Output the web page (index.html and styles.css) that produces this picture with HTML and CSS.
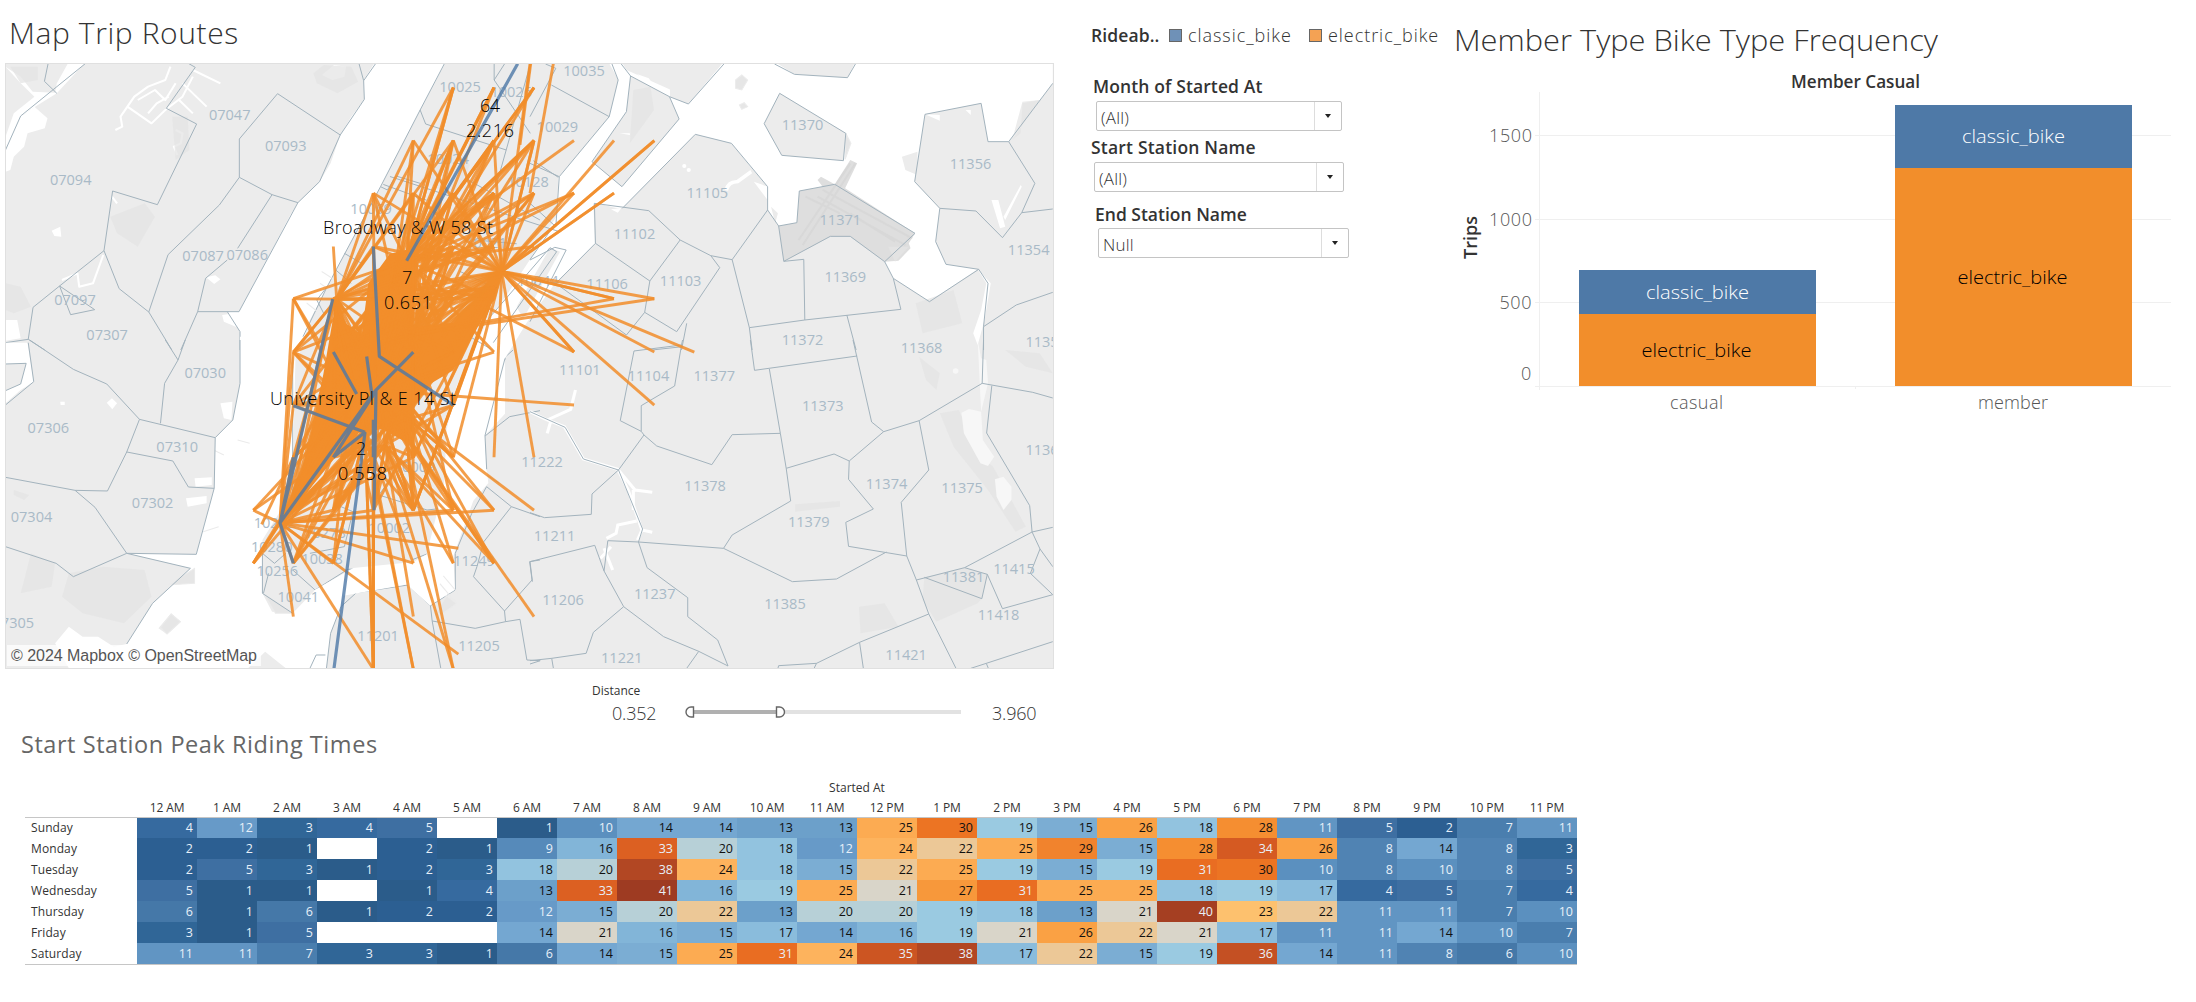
FILE: index.html
```html
<!DOCTYPE html>
<html lang="en">
<head>
<meta charset="utf-8">
<title>Bike Trips Dashboard</title>
<link rel="stylesheet" href="styles.css">
</head>
<body>
<main class="dashboard">
  <div class="top">
    <section class="map-panel">
      <h1 class="sheet-title map-title">Map Trip Routes</h1>
      <svg class="map" viewBox="5 63 1049 606" width="1049" height="606">
        <rect class="land" x="5" y="63" width="1049" height="605"/>
        <!-- Hudson, north-west quarter -->
        <g transform="scale(.34437 .33333)">
          <path class="water" d="M1090 185L1056 240L1058 298L1020 350L988 405L960 490L928 545L865 608L840 650L800 730L694 935L660 935L697 995V1060H870L900 960L950 860L1105 560L1145 480L1220 330L1295 185Z"/>
          <path class="water" d="M250 185L165 280L95 325L60 350L20 450V430L16 480L16 410L40 340L100 290L60 250L16 200L60 230L95 275L160 278L165 250L200 185Z"/>
          <path class="water" d="M60 350L100 320L138 355L130 385L80 400L70 440L40 470L30 510L16 515V450Z"/>
          <path class="water" d="M150 692L175 680L178 710L158 708ZM598 832L625 826L640 838L622 852ZM645 945L690 938L695 985L650 965ZM935 225L970 195L1005 200L1000 230L965 240ZM16 960H50L60 1015L16 1022Z"/>
          <path class="marsh" d="M495 200L480 240L430 260L390 290L370 320L440 370L480 330L530 290L560 230M400 300L450 270L480 300L510 250M430 340L455 310L490 290M520 300L560 340M530 250L600 320M560 210L640 250M370 320L350 350L355 380L335 390M510 390L530 400L525 430L505 440L515 465M180 840L225 820L230 860L270 850L300 765M325 590L340 610"/>
          <path class="shade" d="M320 650L420 610L450 650L400 740L340 700ZM16 850L60 860L90 920L40 940L16 930ZM500 350L545 350L550 450L510 480ZM910 220L940 195L1020 200L1040 245L980 280L920 250ZM30 200H110V240L60 250Z"/>
          <path class="border" d="M140 189L129 244L165 280M250 189L60 348L16 450M545 189L567 202L483 325L571 372L457 614L327 573L302 752L346 866L432 936L499 1050M302 752L173 858L96 922L82 1018L16 1028M173 858L205 944L275 929L173 858M82 1018L130 1050M1090 192L1056 242L1042 189M1056 242L1058 298L988 405L806 281L695 417V532L637 615L488 764L432 936M695 532L790 584L865 608M988 405L928 545L865 608L694 935H574L525 1050M790 584L690 745M660 780L597 835L574 935M660 935L697 995V1050M1290 192L1220 330L1105 560L950 860L880 1010M1220 330L1236 372L1470 450M1105 560L1125 570L1150 528L1220 550M1435 192V240L1540 400M1465 192L1435 240M1540 192L1440 560M1360 540L1568 660M950 860L920 900L940 940M1000 760L1050 790M975 810L1020 850"/>
        </g>
        <!-- Hudson and bay, south-west quarter -->
        <g transform="translate(0 340) scale(.34437 .33333)">
          <path class="water" d="M697 -10V130L676 240L625 293L622 445L570 643L368 640L553 685L443 790L368 912L330 920L285 890L240 890L200 860L160 910L200 985H948L960 880L990 800L1000 720L915 750L850 820L790 815L762 760V600L810 520L850 420L858 50L875 -10Z"/>
          <path class="water" d="M16 8H80L98 125L60 150L16 190ZM310 188L325 175L340 190L326 208ZM640 190L675 185L672 240L650 235ZM565 415L615 412V435L568 440ZM540 475L600 468V490L545 500ZM175 185H188V195H176Z"/>
          <path class="land" d="M16 72L76 70L60 132L16 152ZM460 865L497 820L525 845L485 883ZM720 985L770 935L830 985Z"/>
          <path class="pier" d="M490 735L565 685V730ZM466 862L497 822L524 845L485 882ZM620 330L650 345M590 575L635 560M690 300L725 310M765 760L800 820L850 820Z"/>
          <path class="shade" d="M200 700L300 680L420 690L440 770L360 850L240 820L180 770ZM40 450L85 465L70 480L40 465ZM90 640L160 670L150 740L60 760Z"/>
          <path class="border" d="M82 8L98 125L16 195M16 72L76 70L60 132L16 152M86 0L213 88L310 132L405 238L625 293L676 240L697 130V0M480 0L517 60L538 0M517 60L478 130L466 250M405 238L368 336L312 453L218 451L16 412M368 336L502 363L547 441L622 445L625 293M622 445L570 643L368 640L276 502L218 451M16 620L163 670L213 710L368 640L553 685L443 790L368 912M850 50V550M762 760V640L797 670L830 640M762 760L850 820M780 700L765 760M915 750L850 690M915 750L1010 688L1195 680L1245 640L1285 520M1245 640L1195 660M1100 465L1125 430M1100 465L1240 510L1285 505M990 500L1025 515L1000 620L900 640M948 985L960 880L990 800L1035 758L1185 735L1250 797L1322 750V640L1370 520L1413 440L1485 500L1568 530M1413 405L1406 290L1480 230L1568 212M1406 290L1468 50L1490 30M1413 405L1450 430M1485 500L1405 605L1385 680L1375 710L1465 813L1545 720L1538 665L1568 660M1465 813L1468 845L1380 865L1255 843L1250 797M1255 843L1280 985M1468 845L1510 838L1530 960L1568 962M900 985L918 945H945"/>
        </g>
        <!-- East River -->
        <g transform="translate(240 50) scale(.33333 .3954)">
          <path class="water" d="M1105 30L1135 75L1108 170L955 322L950 420L870 530L800 620L745 680L650 850L620 960L612 1100L560 1275L520 1295L340 1310L225 1365L170 1430L230 1450L275 1440L310 1380L500 1352L570 1405L645 1365L640 1280L700 1140L745 1095L740 1060L735 975L795 920V780L860 690L945 590L1065 490L1060 385L1140 402L1290 250V100Z"/>
          <path class="land" d="M830 650L930 500L960 510L850 680Z"/>
          <path class="border" d="M745 680L930 500L950 510L760 740M870 530L945 440M955 322L880 280M795 780L735 975L740 1060M450 320L960 460M430 340L560 380M700 480L830 490M660 560L760 600M640 700L760 760"/>
          <path class="pier" d="M590 1420L620 1380L650 1400L600 1430ZM610 1330L655 1375M600 1350L645 1395M245 560L300 590M240 590L290 620M200 640L230 660"/>
          <path class="shade" d="M540 330L640 240L690 290L650 370Z"/>
        </g>
        <!-- Flushing Bay, north-east quarter -->
        <g transform="translate(530 0) scale(.34437 .33333)">
          <path class="water" d="M268 625L480 403L585 430L640 500L690 560V630L722 678L775 668L782 573L885 553L1118 700L1030 785L1055 835L1160 905L1300 808L1208 793L1178 725L1190 625L1117 545L1147 343L1310 310L1330 425H1390L1518 250V185H945L922 233L768 223L710 185H563L460 312L405 290L290 225L265 185H238L256 240L230 350L85 530L75 680L120 640L187 610Z"/>
          <path class="land" d="M292 228L405 290L433 357L267 560L180 485L280 335ZM725 280L917 400L910 482L731 466L680 371ZM1080 470L1125 455V525L1090 510ZM1430 305L1480 300L1400 420Z"/>
          <path class="pier" d="M597 240L615 225L632 240L615 270L597 265ZM608 315L622 308L632 320L615 328ZM917 400L932 430L915 478Z"/>
          <path class="airport" d="M782 573L850 560L835 540L845 530L885 553L930 480L950 490L915 565L1118 700L1100 730L1105 745L1070 782L1030 785L930 710H872L737 784L722 678L775 668Z"/>
          <path class="runway" d="M780 720L930 490M792 735L945 490M850 570L1110 715M835 590L1090 735M800 590L900 640M930 640L1060 725"/>
          <path class="water" d="M1340 600L1360 600L1380 680L1365 685ZM1375 650L1425 555L1428 560L1380 660ZM1300 808L1338 850L1320 960L1300 1035L1287 1000L1310 930L1325 850ZM1147 343L1190 345V362ZM1265 330H1280V345ZM565 570Q570 540 600 540L640 510L645 520L605 550Q580 550 575 572ZM650 545L690 560V600ZM235 628L265 625L255 638ZM260 400H290V405ZM310 222L345 235L355 250L340 245Z"/>
          <circle class="water" cx="448" cy="498" r="6"/><circle class="water" cx="461" cy="510" r="6"/>
          <path class="shade" d="M1120 910L1230 870L1255 970L1140 1000ZM1430 310L1480 300L1400 420L1425 400ZM300 270L350 260L360 330L290 430ZM700 620L720 640L712 670ZM1040 740L1100 740L1060 785Z"/>
          <path class="border" d="M238 192L256 240L230 350L62 255M45 192L75 205L0 350M230 350L85 530L0 490M85 530L75 680L0 610M265 192L292 228L405 290L460 312L563 192M292 228L280 335L180 485L267 560L433 357L405 290M710 192L768 223L922 233L945 192M725 280L917 400L910 482L731 466L680 371ZM268 625L480 403L585 430L690 560V630L587 779L525 767L436 720L345 632L187 610L190 730L348 843L436 720M690 630L722 678L737 784L872 709H930L1030 785L1118 700L885 553L782 573L775 668L722 678M737 784L795 778L798 960L637 983L587 779M525 767L551 803L426 995L333 937L348 843M190 730L75 850L280 1005L333 937M637 983L645 1050M798 960L1077 928L1055 835L1030 785M1055 835L1160 905L1303 808L1330 850L1317 980V1050M920 945L947 1050M1303 808L1208 793L1178 725L1190 625L1117 545L1147 343L1310 310L1330 425H1390L1518 250M1390 425L1466 550L1428 638L1372 713L1295 633L1190 625M1428 638L1518 627M1317 980L1412 915L1518 877M455 970L440 1050M355 1050L443 1040M0 780L72 742L105 750L0 965"/>
        </g>
        <!-- Queens and Brooklyn, south-east quarter -->
        <g transform="translate(530 340) scale(.34437 .33333)">
          <path class="creek" d="M0 215L50 240L100 260L155 357L255 388L305 450L355 457M50 240L118 208L132 150M50 280L60 245M255 388L285 450L325 570L312 600M325 570L355 577M310 543L255 555L250 580L222 595M300 450V510M215 625L240 690M205 655L235 620"/>
          <path class="shade" d="M1145 712L1262 683L1328 703L1312 776L1300 790L1180 845L1140 780ZM955 800L1030 790L1070 860L960 880ZM1380 30L1480 40L1518 100L1440 80ZM1190 220L1245 210L1310 350L1345 380L1440 560L1410 575L1330 450L1230 320ZM770 493L900 483V500L770 515ZM1130 50L1190 100L1180 150L1150 120Z"/>
          <path class="pond" d="M1253 218L1275 207L1310 215L1315 300L1348 350L1330 378L1308 370L1260 280ZM1350 418L1375 410L1398 440V480L1375 510L1355 470ZM1310 215L1330 130L1325 60L1310 55L1300 0"/>
          <circle class="pond" cx="1236" cy="93" r="8"/>
          <path class="border" d="M0 215L102 262L155 357L257 390L331 285L368 318L528 374L587 284L727 280L695 87M257 390L180 462L178 523L42 533L0 518M257 390L327 567L315 606L340 683L458 773V830L545 900L575 978L490 934L388 890L272 800L215 693L226 602L315 606L562 625L762 725L890 717L1035 636M562 625L587 585L757 483L744 385L727 280M0 665L188 616L215 693M0 665L7 725M272 800L184 877L163 940L63 955L0 962M63 955L68 985M30 962L0 972M490 934L455 985M720 985L722 977L832 970L957 907L1158 822L1122 720L1262 683L1328 703L1312 776L1145 712M832 970L825 985M957 907L968 985M1158 822L1237 985M1122 720L1094 648L925 619L917 547L997 507L925 418L927 363L883 342L744 385M927 363L1027 275L992 246L938 0M1027 275L1130 242L1158 390L1078 487L1094 648M1130 242L1313 130L1460 157L1518 174M1317 0L1313 130M1341 137L1326 279L1451 497L1458 576L1262 683M1458 576L1518 562M1458 576L1481 627L1453 700L1518 764L1372 806L1328 703M1481 627L1518 680M1280 985L1325 970L1518 905M1325 970L1331 985M640 0L652 91L950 48M443 0L440 15L302 33L262 242L323 274V197L420 138L440 15M323 274L331 285"/>
        </g>
        <g class="zips" transform="scale(1.4005)">
          <text x="164" y="85.5">07047</text><text x="204" y="108">07093</text><text x="50.500" y="132">07094</text><text x="145" y="186.500">07087</text><text x="176.500" y="186">07086</text><text x="53.500" y="217.500">07097</text><text x="76.500" y="242.500">07307</text><text x="146.500" y="270">07030</text><text x="34.500" y="309.500">07306</text><text x="126.500" y="322.500">07310</text><text x="109" y="363">07302</text><text x="22.500" y="372.500">07304</text><text x="9.500" y="448.500">07305</text>
          <text x="328.500" y="66">10025</text><text x="365" y="69">10026</text><text x="417" y="54.500">10035</text><text x="398" y="94">10029</text><text x="320" y="117">10024</text><text x="377" y="133.500">10128</text><text x="265" y="152.500">10069</text><text x="384" y="204.500">10044</text><text x="347" y="177">10021</text><text x="296" y="337">10009</text><text x="278" y="380.500">10002</text><text x="196" y="377">10282</text><text x="194" y="394.500">10280</text><text x="198" y="411">10256</text><text x="232" y="384">10278</text><text x="230" y="402.500">10038</text><text x="213" y="430">10041</text>
          <text x="270" y="457.500">11201</text><text x="342" y="464.500">11205</text><text x="338.500" y="404">11249</text><text x="387" y="333.500">11222</text><text x="396" y="386">11211</text><text x="402" y="432">11206</text><text x="467.500" y="428">11237</text><text x="444" y="473.500">11221</text><text x="414" y="267.500">11101</text><text x="463" y="272">11104</text><text x="453" y="170.500">11102</text><text x="433.500" y="206.500">11106</text><text x="486" y="204.500">11103</text><text x="505" y="141.500">11105</text><text x="573" y="92.500">11370</text><text x="600" y="161">11371</text><text x="693" y="120.500">11356</text><text x="603.500" y="201">11369</text><text x="734.500" y="182">11354</text><text x="573" y="246">11372</text><text x="658" y="252">11368</text><text x="747" y="247.500">11355</text><text x="510" y="272">11377</text><text x="587.500" y="293.500">11373</text><text x="747" y="325">11367</text><text x="503.500" y="350.500">11378</text><text x="633" y="349">11374</text><text x="687" y="352">11375</text><text x="577.500" y="376.500">11379</text><text x="560.500" y="434.500">11385</text><text x="688" y="415.500">11381</text><text x="724" y="409.500">11415</text><text x="713" y="442.500">11418</text><text x="647" y="471.500">11421</text>
        </g>
        <g transform="translate(240 50) scale(.33333 .3954)">
          <path class="core" d="M290 625L315 690L365 720L385 590L450 515L500 505L535 540L520 700L640 690L785 570L740 660L640 810L560 850L515 900L515 1000L430 960L380 950L340 980L250 1060L160 1150L215 960L250 820Z"/>
          <g id="routes"></g>
          <path class="classic" d="M833 35L500 533M400 497L418 775L640 898M280 764L350 870M380 775L397 880M520 764L408 860M160 900L375 967M278 630L160 1060L120 1196L160 1298M160 1030L122 1190M120 1196L408 860M280 1030L405 865M280 1030L375 967L282 1564M400 935V1030M408 860L402 1164"/>
        </g>
        <g class="stations">
          <text x="480" y="112" textLength="20">64</text>
          <text x="466" y="137" textLength="48">2.216</text>
          <text x="323" y="234" textLength="170">Broadway &amp; W 58 St</text>
          <text x="402" y="284" textLength="10">7</text>
          <text x="384" y="309" textLength="48">0.651</text>
          <text x="270" y="405" textLength="186">University Pl &amp; E 14 St</text>
          <text x="356" y="455" textLength="10">2</text>
          <text x="338" y="480" textLength="49">0.558</text>
        </g>
        <rect class="credit-box" x="7" y="645" width="254" height="21"/>
        <text class="credit" x="11" y="660.500" textLength="246">© 2024 Mapbox © OpenStreetMap</text>
        <rect class="frame" x="5.500" y="63.500" width="1048" height="605"/>
      </svg>
      <div class="distance">
        <div class="distance-label">Distance</div>
        <div class="distance-row">
          <span class="distance-value">0.352</span>
          <svg class="slider" width="280" height="14" viewBox="0 0 280 14">
            <rect x="8" y="5" width="268" height="4" fill="#e2e2e2"/>
            <rect x="8" y="5" width="84" height="4" fill="#b0b0b0"/>
            <path d="M8.500 2H6A5 5 0 0 0 6 12H8.500Z" class="handle"/>
            <path d="M91.500 2H94.500A5 5 0 0 1 94.500 12H91.500Z" class="handle"/>
          </svg>
          <span class="distance-value">3.960</span>
        </div>
      </div>
    </section>

    <aside class="filters">
      <div class="legend">
        <b class="legend-title">Rideab..</b>
        <i class="swatch blue"></i><span class="classic-name">classic_bike</span>
        <i class="swatch orange"></i><span class="electric-name">electric_bike</span>
      </div>
      <div class="filter month"><label>Month of Started At</label><div class="select"><span>(All)</span><i class="arrow"></i></div></div>
      <div class="filter start"><label>Start Station Name</label><div class="select"><span>(All)</span><i class="arrow"></i></div></div>
      <div class="filter end"><label>End Station Name</label><div class="select"><span>Null</span><i class="arrow"></i></div></div>
    </aside>

    <section class="chart-panel">
      <svg class="chart" viewBox="1446 0 750 430" width="750" height="430">
        <text class="title" x="1454" y="51" textLength="484" lengthAdjust="spacingAndGlyphs">Member Type Bike Type Frequency</text>
        <text class="strong" x="1791" y="88" textLength="129" lengthAdjust="spacingAndGlyphs">Member Casual</text>
        <path class="grid" d="M1539.500 92V390M1535 135.500H2171M1535 219.500H2171M1535 302.500H2171M1535 386.500H2171M1855.500 386V389"/>
        <rect class="b" x="1579" y="270" width="237" height="44"/><rect class="o" x="1579" y="314" width="237" height="72"/>
        <rect class="b" x="1895" y="105" width="237" height="63"/><rect class="o" x="1895" y="168" width="237" height="218"/>
        <g class="axis">
          <text x="1489" y="142" textLength="43">1500</text><text x="1489" y="225.500" textLength="43">1000</text><text x="1499.500" y="309" textLength="32">500</text><text x="1521" y="380">0</text>
          <text x="1670" y="409" textLength="53">casual</text><text x="1978" y="409" textLength="70">member</text>
        </g>
        <g class="bar-label">
          <text class="light" x="1646" y="299" textLength="103" lengthAdjust="spacingAndGlyphs">classic_bike</text><text x="1641.500" y="357" textLength="110" lengthAdjust="spacingAndGlyphs">electric_bike</text>
          <text class="light" x="1962" y="143" textLength="103" lengthAdjust="spacingAndGlyphs">classic_bike</text><text x="1957.500" y="284" textLength="110" lengthAdjust="spacingAndGlyphs">electric_bike</text>
        </g>
        <text class="strong" transform="translate(1477 259) rotate(-90)" textLength="43" lengthAdjust="spacingAndGlyphs">Trips</text>
      </svg>
    </section>
  </div>

  <section class="heat-panel">
    <h2 class="heat-title">Start Station Peak Riding Times</h2>
    <div class="heat-caption">Started At</div>
    <div class="heat-head" id="hours"></div>
    <div class="heat-body" id="heat"></div>
  </section>
</main>
<script src="script.js"></script>
</body>
</html>
```
FILE: styles.css
```css
* { box-sizing: border-box; }
body { margin: 0; background: #fff; color: #333; font-family: "Open Sans", "Noto Sans", sans-serif; }
.dashboard { width: 2196px; height: 1002px; overflow: hidden; display: flex; flex-direction: column; }
.top { display: flex; height: 725px; }

.map-panel { width: 1060px; padding-left: 5px; }
.sheet-title { margin: 0; font-weight: 300; font-size: 30px; line-height: 65px; height: 63px; padding-left: 4px; }
.map { display: block; }
.map-title { letter-spacing: .6px; }
.land { fill: #ececec; }
.water { fill: #fff; }
.shade { fill: #e4e4e4; opacity: .75; }
.pier { fill: #e6e6e6; stroke: #ebebeb; stroke-width: 3; }
.airport { fill: #dedede; }
.runway { fill: none; stroke: #d3d3d3; stroke-width: 6; opacity: .6; }
.marsh { fill: none; stroke: #fff; stroke-width: 6; stroke-linejoin: round; }
.creek { fill: none; stroke: #fff; stroke-width: 9; }
.pond { fill: #f7f7f7; }
.border { fill: none; stroke: #a3b3bd; stroke-width: 1; vector-effect: non-scaling-stroke; }
.zips { font-size: 10.400px; fill: #a9bac7; text-anchor: middle; }
.core { fill: #f28e2b; }
.electric, .classic { fill: none; vector-effect: non-scaling-stroke; stroke-linejoin: bevel; }
.electric { stroke: #f28e2b; stroke-width: 2.900; opacity: .85; }
.classic { stroke: #4e79a7; stroke-width: 3.200; opacity: .8; }
.stations { font-size: 18px; font-weight: 300; fill: #000; }
.credit-box { fill: #fff; opacity: .75; }
.credit { font: 16px "Liberation Sans", Arial, sans-serif; fill: #555; }
.frame { fill: none; stroke: #e0e0e0; }

.distance { width: 460px; margin-left: 587px; padding-top: 14px; }
.distance-label { font-size: 12px; line-height: 16px; }
.distance-row { display: flex; align-items: center; height: 20px; margin-top: 4px; padding-left: 20px; font-size: 18px; font-weight: 300; letter-spacing: -.2px; }
.distance-value { width: 43px; line-height: 20px; }
.slider { margin: 0 27px 0 30px; position: relative; top: -1px; }
.handle { fill: #fff; stroke: #666; stroke-width: 1.400; }

.filters { width: 386px; padding: 24px 0 0 31px; font-size: 18px; }
.legend { display: flex; align-items: center; height: 22px; white-space: nowrap; font-weight: 300; letter-spacing: .95px; }
.legend-title { font-weight: 600; width: 78px; font-size: 17.500px; letter-spacing: .1px; }
.swatch { width: 13px; height: 13px; border: 1px solid #666; margin-right: 6px; }
.blue { background: #6f91b7; }
.orange { background: #f4a254; }
.classic-name { width: 121px; }
.filter label { display: block; font-weight: 600; font-size: 17.500px; line-height: 22px; white-space: nowrap; }
.month { margin: 29px 0 0 2px; }
.month label { letter-spacing: .12px; }
.start { margin: 5px 0 0 0; }
.start label { letter-spacing: .2px; }
.end { margin: 11px 0 0 4px; }
.select { display: flex; align-items: center; justify-content: space-between; height: 30px; margin-left: 3px; border: 1px solid #c4c4c4; border-radius: 2px; font-size: 17px; font-weight: 300; color: #333; padding-left: 4px; }
.month .select { width: 246px; margin-top: 4px; }
.start .select { width: 250px; margin-top: 4px; }
.end .select { width: 251px; margin-top: 3px; }
.select span { padding-top: 2px; letter-spacing: .2px; }
.arrow { width: 27px; height: 28px; border-left: 1px solid #ddd; display: grid; place-items: center; }
.arrow::after { content: ""; border: 3.500px solid transparent; border-top: 4px solid #222; border-bottom: 0; }

.chart { display: block; }
.chart .title { font-size: 30px; font-weight: 300; fill: #333; }
.chart .strong { font-size: 17.500px; font-weight: 600; fill: #333; }
.grid { fill: none; stroke: #efefef; }
.b { fill: #4e79a7; }
.o { fill: #f28e2b; }
.axis { font-size: 18px; font-weight: 300; fill: #555; }
.bar-label { font-size: 18px; font-weight: 300; fill: #000; }
.bar-label .light { fill: #fff; }

.heat-panel { padding-left: 25px; width: 1577px; }
.heat-title { margin: 0 0 0 -4px; font-size: 23.500px; font-weight: 400; line-height: 38px; color: #666; letter-spacing: .55px; }
.heat-caption { margin: 15px 0 0 112px; text-align: center; font-size: 12px; line-height: 20px; }
.heat-head { margin-left: 112px; display: grid; grid-template-columns: repeat(24, 60px); height: 19px; font-size: 12px; line-height: 19px; text-align: center; letter-spacing: -.1px; }
.heat-body { border-top: 1px solid #c6c6c6; border-bottom: 1px solid #c6c6c6; font-size: 12px; }
.heat-row { display: grid; grid-template-columns: 112px repeat(24, 60px); height: 21px; line-height: 21px; }
.heat-row:first-child { height: 20px; line-height: 20px; }
.day { padding-left: 6px; letter-spacing: .1px; }
.cell { padding-right: 4px; text-align: right; font-size: 12.500px; color: #111; }
.cell.light { color: #e8f0f8; }
```
FILE: script.js
```js
// Hour-by-day heat table
const ramp = {1:'#2b5c8a',2:'#2c5f92',3:'#306697',4:'#366a9f',5:'#3e6fa2',6:'#4578a8',7:'#4a7eae',8:'#5083b3',9:'#568aba',10:'#5b90bf',11:'#6195c3',12:'#679ac8',13:'#6ca0ca',14:'#74a7d1',15:'#7badd3',16:'#82b5d8',17:'#8abcdc',18:'#92c3df',19:'#9acae1',20:'#b7d0d7',21:'#d9d5c9',22:'#ecc897',23:'#fdc16e',24:'#fdb35d',25:'#fcab52',26:'#faa144',27:'#f7983b',28:'#f58e31',29:'#f1832d',30:'#ec7423',31:'#e96d22',33:'#dc6022',34:'#d55a22',35:'#cc5522',36:'#c45023',38:'#b24723',40:'#a53f22',41:'#9e3b22'};
const days = {
  Sunday: '4 12 3 4 5 - 1 10 14 14 13 13 25 30 19 15 26 18 28 11 5 2 7 11',
  Monday: '2 2 1 - 2 1 9 16 33 20 18 12 24 22 25 29 15 28 34 26 8 14 8 3',
  Tuesday: '2 5 3 1 2 3 18 20 38 24 18 15 22 25 19 15 19 31 30 10 8 10 8 5',
  Wednesday: '5 1 1 - 1 4 13 33 41 16 19 25 21 27 31 25 25 18 19 17 4 5 7 4',
  Thursday: '6 1 6 1 2 2 12 15 20 22 13 20 20 19 18 13 21 40 23 22 11 11 7 10',
  Friday: '3 1 5 - - - 14 21 16 15 17 14 16 19 21 26 22 21 17 11 11 14 10 7',
  Saturday: '11 11 7 3 3 1 6 14 15 25 31 24 35 38 17 22 15 19 36 14 11 8 6 10'
};
document.getElementById('hours').innerHTML = Array.from({length: 24}, (_, h) =>
  `<span>${h % 12 || 12} ${h < 12 ? 'AM' : 'PM'}</span>`).join('');
document.getElementById('heat').innerHTML = Object.entries(days).map(([day, row]) =>
  `<div class="heat-row"><span class="day">${day}</span>` + row.split(' ').map(v => v === '-' ? '<span></span>' :
    `<span class="cell${v < 13 || v > 30 ? ' light' : ''}" style="background:${ramp[v]}">${v}</span>`).join('') + '</div>').join('');

// Trip routes: every station hub fans out to rounded end coordinates (column, row)
const X = [40,160,280,400,520,640,762,882,1002,1122,1243,1363];
const Y = [95,229,362,497,629,764,898,1030,1164,1298,1433,1566];
const fans = [
  [500,533,'50 50 60 60 70 70 41 51 51 61 61 71 71 81 42 52 62 72 82 32 33 34 63 73 24 25 35 45 26 36 46 56 55 65 54 64 44 43 53 15 16 27 37 47 28 14'],
  [460,590,'50 41 51 60 61 42 52 62 32 63 54 64 55 25 24 26 27 17 71'],
  [540,560,'60 61 71 70 62 72 51 82 63 35 34 25 26 36 55 46'],
  [785,560,'62 72 71 71 61 a1 a1 91 92 92 82 51 41 52 42 94 94 a4 b5 a5 a6 85 85 67 77 44 54 45 35 34 24 25 46 56 55 36 47 37 48 48 33 43 32 53 57 26 27 38 28 15 17 64'],
  [765,600,'45 35 55 46 36 26 27 56 48 47 25 34 44 54'],
  [405,860,'24 34 44 33 42 43 53 54 45 55 35 25 15 16 17 27 37 47 57 57 48 48 58 68 78 38 28 18 39 69 69 29 19 86 7a 32 61 64 65 72'],
  [375,967,'08 09 18 28 19 15 16 24 25 34 44 45 54 55 3b 3b 4b 48 49 29 46 56 27 36 64 26 35'],
  [330,900,'18 28 19 27 17 16 15 24 14 44 43 08 55 38 29 09'],
  [120,1196,'15 14 16 24 25 26 34 35 44 45 36 27 37 46 47 28 18 08 09 09 19 29 49 1a 68 58 3b 43 54 38 55 17'],
  [150,1165,'24 25 34 35 26 36 45 46 27 37 44 55'],
  [290,630,'33 32 42 34 44 54 64 35 45 36 14 15 15 25 53 63 62 51 50 41 46 27 17 26 16 47'],
  [435,1000,'38 38 48 48 47 58 69 59 4a 5b 27 28 45 55 53 52 37 44 34 56 19'],
  [490,880,'48 48 38 58 68 57 69 59 47 28 27 18 53 62 66'],
  [518,720,'61 71 72 62 63 54 55 46 47 48 57 58 94 a4 42 51 34 25 16 36 27 18 35 53 52'],
  [400,1050,'3b 3b 3b 4b 38 28 18 19 48 44 34 24']
];
const lines = [[280,497,290,630],[160,629,235,735],[870,35,785,560],[940,35,870,362],[872,35,840,240],[655,1528,120,1196],[120,1196,655,1260],[640,1566,510,1050],[1002,764,740,650],[65,1200,160,1030]];
const paths = fans.flatMap(([x, y, ends]) => ends.split(' ').filter(e => e !== '66').map(e =>
  [x, y, X[parseInt(e[0], 12)], Y[parseInt(e[1], 12)]])).concat(lines);
document.getElementById('routes').innerHTML = paths.map(p =>
  `<path class="electric" d="M${p[0]} ${p[1]}L${p[2]} ${p[3]}"/>`).join('');
```
